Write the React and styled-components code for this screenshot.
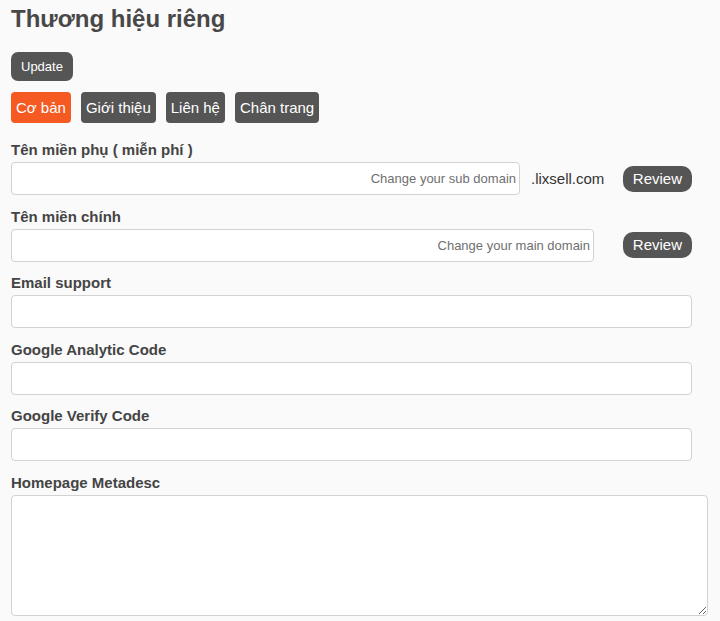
import React from "react";
import styled, { createGlobalStyle } from "styled-components";

const GlobalStyle = createGlobalStyle`
  html, body {
    margin: 0;
    padding: 0;
    background: #fafafa;
    font-family: "Liberation Sans", Arial, sans-serif;
  }
  * {
    box-sizing: border-box;
  }
`;

const Page = styled.div`
  display: flex;
  flex-direction: column;
  padding: 5px 12px 0 11px;
  background: #fafafa;
  min-height: 621px;
`;

const Title = styled.h1`
  margin: 0;
  font-size: 24px;
  line-height: 27px;
  font-weight: bold;
  color: #484848;
`;

const DarkButton = styled.button`
  border: 0;
  background: #555555;
  color: #fff;
  font-family: "Liberation Sans", Arial, sans-serif;
  cursor: pointer;
`;

const UpdateButton = styled(DarkButton)`
  align-self: flex-start;
  margin-top: 20px;
  padding: 7px 10px;
  font-size: 13px;
  line-height: 15px;
  border-radius: 7px;
`;

const Tabs = styled.div`
  display: flex;
  gap: 10px;
  margin-top: 11px;
`;

const Tab = styled(DarkButton)`
  padding: 7px 5px;
  font-size: 15px;
  line-height: 17px;
  border-radius: 4px;
  background: ${(p) => (p.$active ? "#f45a22" : "#555555")};
`;

const Form = styled.div`
  display: flex;
  flex-direction: column;
  gap: 12.5px;
  margin-top: 18px;
`;

const Field = styled.div`
  display: flex;
  flex-direction: column;
  gap: 4px;
`;

const Label = styled.label`
  font-size: 15px;
  line-height: 17px;
  font-weight: bold;
  color: #444;
`;

const Input = styled.input`
  width: ${(p) => p.$width || "681px"};
  height: 33px;
  padding: 0 3px 0 8px;
  border: 1px solid #d2d2d2;
  border-radius: 4px;
  background: #fff;
  font-family: "Liberation Sans", Arial, sans-serif;
  font-size: 13px;
  text-align: ${(p) => (p.$right ? "right" : "left")};
  color: #333;
  &::placeholder {
    color: #6f6f6f;
  }
`;

const DomainRow = styled.div`
  display: flex;
  align-items: center;
  width: 681px;
`;

const Suffix = styled.span`
  margin-left: 11px;
  font-size: 15px;
  color: #333;
`;

const ReviewButton = styled(DarkButton)`
  margin-left: auto;
  padding: 4px 10px 5px;
  font-size: 15px;
  line-height: 17px;
  border-radius: 10px;
`;

const TextArea = styled.textarea`
  width: 697px;
  height: 121px;
  border: 1px solid #d2d2d2;
  border-radius: 4px;
  background: #fff;
  font-family: "Liberation Sans", Arial, sans-serif;
`;

const tabs = ["Cơ bản", "Giới thiệu", "Liên hệ", "Chân trang"];

export default function App() {
  return (
    <>
      <GlobalStyle />
      <Page>
        <Title>Thương hiệu riêng</Title>
        <UpdateButton>Update</UpdateButton>
        <Tabs>
          {tabs.map((t, i) => (
            <Tab key={t} $active={i === 0}>
              {t}
            </Tab>
          ))}
        </Tabs>
        <Form>
          <Field>
            <Label>Tên miền phụ ( miễn phí )</Label>
            <DomainRow>
              <Input $width="509px" $right placeholder="Change your sub domain" />
              <Suffix>.lixsell.com</Suffix>
              <ReviewButton>Review</ReviewButton>
            </DomainRow>
          </Field>
          <Field>
            <Label>Tên miền chính</Label>
            <DomainRow>
              <Input $width="583px" $right placeholder="Change your main domain" />
              <ReviewButton>Review</ReviewButton>
            </DomainRow>
          </Field>
          <Field>
            <Label>Email support</Label>
            <Input />
          </Field>
          <Field>
            <Label>Google Analytic Code</Label>
            <Input />
          </Field>
          <Field>
            <Label>Google Verify Code</Label>
            <Input />
          </Field>
          <Field>
            <Label>Homepage Metadesc</Label>
            <TextArea />
          </Field>
        </Form>
      </Page>
    </>
  );
}
